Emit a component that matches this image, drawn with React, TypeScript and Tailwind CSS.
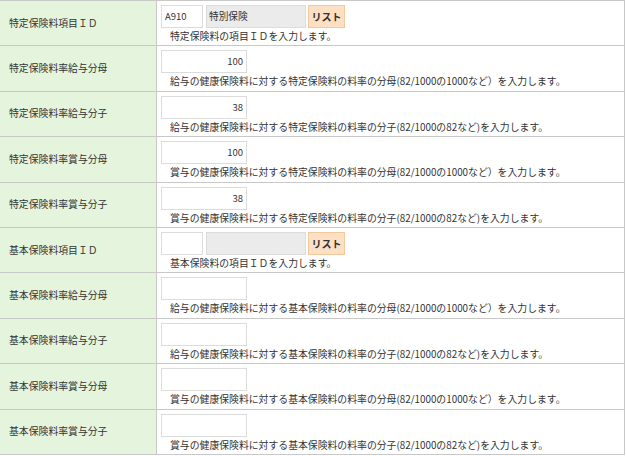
import React from "react";

type Row = {
  label: string;
  desc: string;
  kind: "id" | "num";
  code?: string;
  name?: string;
  value?: string;
};

const rows: Row[] = [
  { label: "特定保険料項目ＩＤ", desc: "特定保険料の項目ＩＤを入力します。", kind: "id", code: "A910", name: "特別保険" },
  { label: "特定保険料率給与分母", desc: "給与の健康保険料に対する特定保険料の料率の分母(82/1000の1000など）を入力します。", kind: "num", value: "100" },
  { label: "特定保険料率給与分子", desc: "給与の健康保険料に対する特定保険料の料率の分子(82/1000の82など)を入力します。", kind: "num", value: "38" },
  { label: "特定保険料率賞与分母", desc: "賞与の健康保険料に対する特定保険料の料率の分母(82/1000の1000など）を入力します。", kind: "num", value: "100" },
  { label: "特定保険料率賞与分子", desc: "賞与の健康保険料に対する特定保険料の料率の分子(82/1000の82など)を入力します。", kind: "num", value: "38" },
  { label: "基本保険料項目ＩＤ", desc: "基本保険料の項目ＩＤを入力します。", kind: "id", code: "", name: "" },
  { label: "基本保険料率給与分母", desc: "給与の健康保険料に対する基本保険料の料率の分母(82/1000の1000など）を入力します。", kind: "num", value: "" },
  { label: "基本保険料率給与分子", desc: "給与の健康保険料に対する基本保険料の料率の分子(82/1000の82など)を入力します。", kind: "num", value: "" },
  { label: "基本保険料率賞与分母", desc: "賞与の健康保険料に対する基本保険料の料率の分母(82/1000の1000など）を入力します。", kind: "num", value: "" },
  { label: "基本保険料率賞与分子", desc: "賞与の健康保険料に対する基本保険料の料率の分子(82/1000の82など)を入力します。", kind: "num", value: "" },
];

export default function App() {
  return (
    <div className="w-[626px] h-[456px] overflow-hidden bg-white text-[#333] font-['Noto_Sans_CJK_JP',sans-serif]">
      <div className="w-[625px] border-t border-r border-[#c8c8c8]">
        {rows.map((r, i) => (
          <div key={i} className="flex h-[45.4px] border-b border-[#c8c8c8]">
            <div className="w-[157px] shrink-0 bg-[#e5f4dc] border-r border-[#c8c8c8] flex items-center pl-[9px] text-[9.85px] leading-[13px]">
              {r.label}
            </div>
            <div className="flex-1 pl-[4px] pt-[4px]">
              {r.kind === "id" ? (
                <div className="flex h-[23px] items-stretch">
                  <div className="w-[42px] border border-[#dcdcdc] bg-white text-[9.5px] leading-[21px] pl-[3px]">
                    {r.code}
                  </div>
                  <div className="w-[100px] ml-[3px] border border-[#dcdcdc] bg-[#ebebeb] text-[9.7px] leading-[21px] pl-[2px]">
                    {r.name}
                  </div>
                  <div className="w-[37px] ml-[2px] border border-[#f2c89c] bg-[#fde0c3] text-[10px] font-bold leading-[21px] text-center text-[#333]">
                    リスト
                  </div>
                </div>
              ) : (
                <div className="w-[86px] h-[23px] border border-[#dcdcdc] bg-white text-[9.5px] leading-[21px] text-right pr-[3px]">
                  {r.value}
                </div>
              )}
              <div className="mt-[2px] pl-[9px] text-[9.85px] leading-[13px] whitespace-nowrap">
                {r.desc}
              </div>
            </div>
          </div>
        ))}
      </div>
    </div>
  );
}
